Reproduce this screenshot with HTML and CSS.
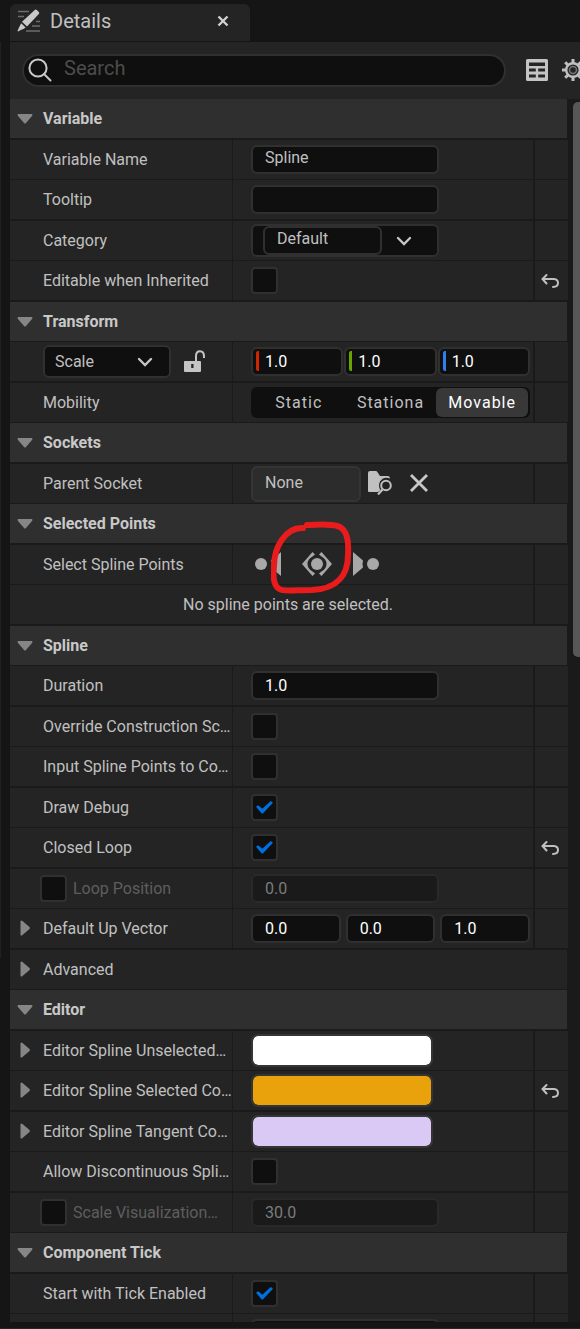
FILE: index.html
```html
<!DOCTYPE html>
<html lang="en">
<head>
<meta charset="utf-8">
<meta name="viewport" content="width=device-width, initial-scale=1">
<title>Details</title>
<link rel="stylesheet" href="styles.css">
</head>
<body>
<svg class="symbols" aria-hidden="true">
  <symbol id="down" viewBox="0 0 16 10"><path d="M1 0H15Q16 1 15 2L9 9Q8 10 7 9L1 2Q0 1 1 0Z" fill="#868686"/></symbol>
  <symbol id="right" viewBox="0 0 10 16"><path d="M0 1Q1 0 2 1L9 7Q10 8 9 9L2 15Q1 16 0 15Z" fill="#868686"/></symbol>
  <symbol id="chevron" viewBox="0 0 16 10"><path d="M2 2L8 8L14 2" fill="none" stroke="#c6c6c6" stroke-width="2.4" stroke-linecap="round"/></symbol>
  <symbol id="reset" viewBox="0 0 18 14"><path d="M5.5 1L1.5 5L5.5 9.500M2 5H13Q17 5.500 17 9Q17 12.800 12 13" fill="none" stroke="#c0c0c0" stroke-width="2" stroke-linecap="round"/></symbol>
</svg>
<main class="panel">
  <header class="tabs">
    <div class="tab">
      <svg class="tab-icon" viewBox="0 0 24 24" aria-hidden="true">
        <path d="M1 2.500H12M1 7.500H7M19 12.500H23M15 17H23M9 22H23" stroke="#6c6c6c" stroke-width="1.400"/>
        <path d="M17.500 1.200Q18.500 0 19.800 1L21.800 3Q22.800 4 21.800 5L10 17.500L5 12.800Z M4.200 14.200L8.600 18.400L6.500 20L3.800 21L1 22.500L.5 22L2 18.500Z" fill="#c8c8c8"/>
      </svg>
      <h1>Details</h1>
      <button class="plain close" aria-label="Close tab"><svg viewBox="0 0 12 12"><path d="M1.500 1.500L10.500 10.500M10.500 1.500L1.500 10.500" stroke="#d0d0d0" stroke-width="2.400"/></svg></button>
    </div>
  </header>
  <div class="toolbar">
    <label class="search">
      <svg viewBox="0 0 24 24" aria-hidden="true"><circle cx="10" cy="10" r="8.600"/><path d="M16 16L22.500 22.500"/></svg>
      <input type="search" placeholder="Search" aria-label="Search">
    </label>
    <button class="plain" aria-label="Property matrix"><svg class="matrix" viewBox="0 0 22 22"><path fill="#c4c4c4" fill-rule="evenodd" d="M1.500 0H20.500Q22 0 22 1.500V20.500Q22 22 20.500 22H1.500Q0 22 0 20.500V1.500Q0 0 1.500 0ZM3 3.500V7H19V3.500ZM3 9.500V12.500H9.800V9.500ZM12.200 9.500V12.500H19V9.500ZM3 15.500V18.500H9.800V15.500ZM12.200 15.500V18.500H19V15.500Z"/></svg></button>
    <button class="plain" aria-label="Settings"><svg class="gear" viewBox="0 0 22 22"><path d="M11 0V22M0 11H22M3.200 3.200L18.800 18.800M18.800 3.200L3.200 18.800" stroke="#c0c0c0" stroke-width="3"/><circle cx="11" cy="11" r="6.800" fill="#242424" stroke="#c0c0c0" stroke-width="2.400"/><circle cx="11" cy="11" r="3.500" fill="#242424" stroke="#777" stroke-width="1.500"/></svg></button>
  </div>
  <div class="body">
    <div class="list">
      <h2 class="row head"><svg class="down"><use href="#down"/></svg>Variable</h2>
      <div class="row"><label class="name" for="vname">Variable Name</label><div class="value"><input class="box wide raised" id="vname" value="Spline"></div><div class="end"></div></div>
      <div class="row"><label class="name" for="tip">Tooltip</label><div class="value"><input class="box wide" id="tip"></div><div class="end"></div></div>
      <div class="row"><label class="name" for="cat">Category</label><div class="value"><div class="combo"><input class="box raised" id="cat" value="Default"><button class="plain" aria-label="Choose category"><svg class="chevron"><use href="#chevron"/></svg></button></div></div><div class="end"></div></div>
      <div class="row"><label class="name" for="editable">Editable when Inherited</label><div class="value"><input type="checkbox" id="editable"></div><div class="end"><button class="plain" aria-label="Reset"><svg class="reset"><use href="#reset"/></svg></button></div></div>

      <h2 class="row head"><svg class="down"><use href="#down"/></svg>Transform</h2>
      <div class="row"><div class="name scale"><div class="picker"><select aria-label="Transform kind"><option>Scale</option></select><svg class="chevron"><use href="#chevron"/></svg></div><button class="plain" aria-label="Lock ratio"><svg class="lock" viewBox="0 0 22 22"><path d="M0 11.500Q0 11 1 11H16Q17 11 17 12V21Q17 22 16 22H1Q0 22 0 21ZM7.200 14V18H9.500V14Z" fill="#c4c4c4" fill-rule="evenodd"/><path d="M12 11V6Q12 1.200 16 1.200Q20 1.200 20 6.500V8" fill="none" stroke="#c4c4c4" stroke-width="2"/></svg></button></div>
        <div class="value xyz tight"><span class="axis x"><input class="box" value="1.0" aria-label="Scale X"></span><span class="axis y"><input class="box" value="1.0" aria-label="Scale Y"></span><span class="axis z"><input class="box" value="1.0" aria-label="Scale Z"></span></div><div class="end"></div></div>
      <div class="row"><div class="name">Mobility</div><div class="value"><div class="segments" role="radiogroup" aria-label="Mobility"><label><input type="radio" name="mobility">Static</label><label><input type="radio" name="mobility">Stationa</label><label><input type="radio" name="mobility" checked>Movable</label></div></div><div class="end"></div></div>

      <h2 class="row head"><svg class="down"><use href="#down"/></svg>Sockets</h2>
      <div class="row"><label class="name" for="socket">Parent Socket</label><div class="value socket"><input class="box" id="socket" value="None" readonly>
        <button class="plain" aria-label="Browse sockets"><svg class="browse" viewBox="0 0 24 24"><path d="M0 2Q0 0 2 0H8Q9 0 10 2L12 5H20Q22 5 22 7.500Q18 6 15 7.500Q11 10 11 14.500Q11 17.500 12.500 19L10 21H1Q0 21 0 20Z" fill="#c0c0c0"/><circle cx="18" cy="14.500" r="4.800" fill="none" stroke="#c0c0c0" stroke-width="2"/><path d="M14.500 18.500L10 23.500" stroke="#c0c0c0" stroke-width="2.200"/></svg></button>
        <button class="plain" aria-label="Clear socket"><svg class="clear" viewBox="0 0 18 18"><path d="M1 1L17 17M17 1L1 17" stroke="#c8c8c8" stroke-width="2.800"/></svg></button></div><div class="end"></div></div>

      <h2 class="row head"><svg class="down"><use href="#down"/></svg>Selected Points</h2>
      <div class="row"><div class="name">Select Spline Points</div><div class="value points">
        <button class="plain" aria-label="Previous point"><svg class="point-side" viewBox="0 0 26 24"><circle cx="6" cy="12" r="6"/><path d="M26 0V24L16 15.500Q18 12 16 8.500Z"/></svg></button>
        <button class="plain" aria-label="All points"><svg class="point-all" viewBox="0 0 30 24"><circle cx="15" cy="12" r="6"/><path d="M10.500 0L13 2.500L10.500 4.500Q5.500 7 5.500 12Q5.500 17 10.500 19.500L13 21.500L10.500 24L0 12ZM19.500 0L17 2.500L19.500 4.500Q24.500 7 24.500 12Q24.500 17 19.500 19.500L17 21.500L19.500 24L30 12Z"/></svg></button>
        <button class="plain" aria-label="Next point"><svg class="point-side" viewBox="0 0 26 24"><circle cx="20" cy="12" r="6"/><path d="M0 0V24L10 15.500Q9 12 10 8.500Z"/></svg></button>
        <svg class="mark" viewBox="0 0 84 76" aria-hidden="true"><path d="M32 8C14 7 3 28 3 46C2 55 2 64 7 68C10 72 24 70 41 70C68 69 77 53 77 35C78 19 76 4 59 5C52 4 44 5 36 5"/></svg>
      </div><div class="end"></div></div>
      <div class="row"><p class="message">No spline points are selected.</p><div class="end"></div></div>

      <h2 class="row head"><svg class="down"><use href="#down"/></svg>Spline</h2>
      <div class="row"><label class="name" for="duration">Duration</label><div class="value"><input class="box wide number" id="duration" value="1.0"></div><div class="end"></div></div>
      <div class="row"><label class="name" for="override">Override Construction Sc…</label><div class="value"><input type="checkbox" id="override"></div><div class="end"></div></div>
      <div class="row"><label class="name" for="inputpts">Input Spline Points to Co…</label><div class="value"><input type="checkbox" id="inputpts"></div><div class="end"></div></div>
      <div class="row"><label class="name" for="debug">Draw Debug</label><div class="value"><input type="checkbox" id="debug" checked></div><div class="end"></div></div>
      <div class="row"><label class="name" for="closed">Closed Loop</label><div class="value"><input type="checkbox" id="closed" checked></div><div class="end"><button class="plain" aria-label="Reset"><svg class="reset"><use href="#reset"/></svg></button></div></div>
      <div class="row"><div class="name optional"><input type="checkbox" id="loopon"><label for="loopon">Loop Position</label></div><div class="value"><input class="box wide" value="0.0" aria-label="Loop Position" disabled></div><div class="end"></div></div>
      <div class="row"><div class="name"><svg class="right"><use href="#right"/></svg>Default Up Vector</div><div class="value xyz"><input class="box number" value="0.0" aria-label="Up X"><input class="box number" value="0.0" aria-label="Up Y"><input class="box number" value="1.0" aria-label="Up Z"></div><div class="end"></div></div>
      <div class="row full"><div class="name"><svg class="right"><use href="#right"/></svg>Advanced</div></div>

      <h2 class="row head"><svg class="down"><use href="#down"/></svg>Editor</h2>
      <div class="row"><label class="name" for="unselected"><svg class="right"><use href="#right"/></svg>Editor Spline Unselected…</label><div class="value"><input type="color" id="unselected" value="#ffffff"></div><div class="end"></div></div>
      <div class="row"><label class="name" for="selected"><svg class="right"><use href="#right"/></svg>Editor Spline Selected Co…</label><div class="value"><input type="color" id="selected" value="#e9a20b"></div><div class="end"><button class="plain" aria-label="Reset"><svg class="reset"><use href="#reset"/></svg></button></div></div>
      <div class="row"><label class="name" for="tangent"><svg class="right"><use href="#right"/></svg>Editor Spline Tangent Co…</label><div class="value"><input type="color" id="tangent" value="#dac9f5"></div><div class="end"></div></div>
      <div class="row"><label class="name" for="allow">Allow Discontinuous Spli…</label><div class="value"><input type="checkbox" id="allow"></div><div class="end"></div></div>
      <div class="row"><div class="name optional"><input type="checkbox" id="vison"><label for="vison">Scale Visualization…</label></div><div class="value"><input class="box wide" value="30.0" aria-label="Scale Visualization" disabled></div><div class="end"></div></div>

      <h2 class="row head"><svg class="down"><use href="#down"/></svg>Component Tick</h2>
      <div class="row"><label class="name" for="tick">Start with Tick Enabled</label><div class="value"><input type="checkbox" id="tick" checked></div><div class="end"></div></div>
      <div class="row"><div class="name"></div><div class="value"><input class="box wide" aria-label="Tick Interval"></div><div class="end"></div></div>
    </div>
    <div class="scrollbar"><div class="thumb"></div></div>
  </div>
</main>
</body>
</html>
```
FILE: styles.css
```css
* { box-sizing: border-box; }

body {
  margin: 0;
  overflow: hidden;
  background: #151515;
  color: #c0c0c0;
  font: 16px/20px Roboto, "Liberation Sans", sans-serif;
}

h1, h2, p { margin: 0; }
input, select, button { font: inherit; color: inherit; margin: 0; }
svg { display: block; flex: none; }
.symbols { position: absolute; width: 0; height: 0; }

.plain {
  display: flex;
  padding: 0;
  border: 0;
  background: none;
}

.panel {
  display: flex;
  flex-direction: column;
  height: 100vh;
  padding: 4px 0 6px 10px;
  border-bottom: 1px solid #242424;
  background: linear-gradient(#202020, #202020) 0 42px / 1px 916px no-repeat;
}

.tab {
  display: flex;
  align-items: center;
  width: 240px;
  height: 37px;
  padding: 0 21px 3px 7px;
  border-radius: 6px 6px 0 0;
  background: #242424;
}

.tab-icon { width: 24px; height: 24px; }
.tab h1 { flex: 1; margin-left: 9px; font-size: 20px; line-height: 24px; font-weight: 400; }
.close svg { width: 12px; height: 12px; }

.toolbar {
  display: flex;
  align-items: center;
  height: 57px;
  margin: 1px -4px 0 0;
  padding-left: 12px;
  background: #242424;
}

.toolbar .plain { margin-left: 20px; padding-bottom: 1px; }
.toolbar .plain + .plain { margin-left: 14px; }
.matrix, .gear { width: 22px; height: 22px; }

.search {
  display: flex;
  align-items: center;
  flex: 1;
  min-width: 0;
  height: 33px;
  padding: 0 0 2px 4px;
  border: 2px solid #303030;
  border-radius: 17px;
  background: #0f0f0f;
}

.search svg { width: 24px; height: 24px; fill: none; stroke: #c8c8c8; stroke-width: 2; stroke-linecap: round; }
.search input {
  flex: 1;
  min-width: 0;
  padding: 0 0 4px 12px;
  border: 0;
  outline: 0;
  background: none;
  font-size: 20px;
  line-height: 24px;
  appearance: none;
}
.search input::placeholder { color: #4c4c4c; }

.body {
  display: flex;
  flex: 1;
  min-height: 0;
  background: #1a1a1a;
}

.list { flex: 1; min-width: 0; overflow: hidden; }

.row {
  display: grid;
  grid-template-columns: 222fr 301fr 35fr;
  height: 40px;
  border-bottom: 1px solid #1a1a1a;
}
.row:nth-child(odd) { height: 41px; border-bottom-width: 2px; }
.row > div, .row > label, .row > p { min-width: 0; background: #242424; }

.row.head {
  display: flex;
  align-items: center;
  gap: 10px;
  margin-right: 1px;
  padding-left: 7px;
  background: #2f2f2f;
  font-size: 16px;
  line-height: 20px;
  font-weight: 700;
  color: #c8c8c8;
}
.row.full { grid-template-columns: 1fr; margin-right: 1px; }

.down { width: 16px; height: 10px; }
.right { position: absolute; left: 10px; top: 11px; width: 11px; height: 16px; }
.chevron { width: 16px; height: 10px; }
.reset { width: 18px; height: 14px; }

.name {
  position: relative;
  display: flex;
  align-items: center;
  padding-left: 33px;
  padding-top: 1px;
  white-space: nowrap;
}

.value {
  position: relative;
  display: flex;
  align-items: center;
  margin-left: 1px;
  padding-left: 18px;
}

.end {
  display: flex;
  align-items: center;
  margin-left: 2px;
  padding: 1px 0 0 6px;
}

.message {
  grid-column: 1 / 3;
  padding: 10px 0 0 33px;
  text-align: center;
}

.optional { gap: 6px; padding-left: 30px; padding-top: 0; color: #5e5e5e; }

.box {
  min-width: 0;
  height: 29px;
  padding: 0 0 0 12px;
  border: 2px solid #303030;
  border-radius: 6px;
  background: #0f0f0f;
}
.box.wide { width: 188px; }
.box.raised { padding-bottom: 4px; }
.box.number, .axis .box { color: #fff; }
.box:disabled { color: #7c7c7c; background: #1a1a1a; border-color: #292929; }

.combo {
  display: flex;
  align-items: center;
  width: 188px;
  height: 33px;
  padding-left: 10px;
  border: 2px solid #303030;
  border-radius: 6px;
  background: #0f0f0f;
}
.combo .box { width: 119px; }
.combo .plain { margin-left: 14px; }

.name.scale { gap: 13px; padding-top: 0; }
.scale .plain { padding-bottom: 2px; }
.picker { position: relative; }
.picker select {
  display: block;
  width: 128px;
  height: 33px;
  padding: 0 10px;
  border: 2px solid #303030;
  border-radius: 6px;
  background: #0f0f0f;
  appearance: none;
}
.picker .chevron { position: absolute; right: 18px; top: 12px; }
.lock { width: 22px; height: 22px; }

.xyz { display: grid; grid-template-columns: repeat(3, 1fr); gap: 5px; padding-right: 3px; }
.xyz.tight { gap: 1px; }
.xyz .box { width: 100%; }
.axis { position: relative; display: flex; }
.axis::before {
  content: "";
  position: absolute;
  left: 5px;
  top: 4px;
  width: 3px;
  height: 20px;
  border-radius: 2px 0 0 2px;
}
.x::before { background: #cf2600; }
.y::before { background: #67a500; }
.z::before { background: #2f7ff0; }

.segments {
  display: grid;
  grid-template-columns: repeat(3, 1fr);
  width: 279px;
  height: 31px;
  padding: 1px 2px;
  border-radius: 6px;
  background: #0f0f0f;
  letter-spacing: 1px;
}
.segments label {
  display: flex;
  align-items: center;
  justify-content: center;
  border-radius: 6px;
}
.segments input { appearance: none; width: 0; height: 0; }
.segments label:has(:checked) { background: #383838; color: #fff; }

.socket .box { width: 110px; height: 36px; padding-bottom: 3px; background: #2c2c2c; border-color: #343434; }
.socket .plain { margin-left: 7px; padding-bottom: 1px; }
.socket .plain + .plain { margin-left: 18px; }
.browse { width: 24px; height: 24px; }
.clear { width: 18px; height: 18px; }

.points { gap: 21px; padding-left: 22px; padding-bottom: 2px; }
.points .plain svg { fill: #a8a8a8; }
.point-side { width: 26px; height: 24px; }
.point-all { width: 30px; height: 24px; }
.mark {
  position: absolute;
  left: 38px;
  top: -25px;
  width: 84px;
  height: 76px;
  z-index: 1;
  fill: none;
  stroke: #e81c1c;
  stroke-width: 6;
  stroke-linecap: round;
  pointer-events: none;
}

input[type="checkbox"] {
  display: grid;
  place-items: center;
  width: 27px;
  height: 27px;
  border: 2px solid #303030;
  border-radius: 4px;
  background: #0f0f0f;
  appearance: none;
}
input[type="checkbox"]:checked::before {
  content: "";
  width: 17px;
  height: 13px;
  background: #0070e0;
  clip-path: polygon(0 45%, 13% 33%, 37% 60%, 87% 0, 100% 14%, 40% 96%, 34% 96%);
}

input[type="color"] {
  width: 182px;
  height: 33px;
  padding: 0;
  border: 2px solid #353535;
  border-radius: 7px;
  background: none;
  appearance: none;
  overflow: hidden;
}
input[type="color"]::-webkit-color-swatch-wrapper { padding: 0; }
input[type="color"]::-webkit-color-swatch { border: 0; border-radius: 5px; }

.scrollbar { width: 12px; padding: 3px 0 0 5px; overflow: hidden; }
.thumb { width: 12px; height: 555px; border-radius: 5px; background: #575757; }
```
